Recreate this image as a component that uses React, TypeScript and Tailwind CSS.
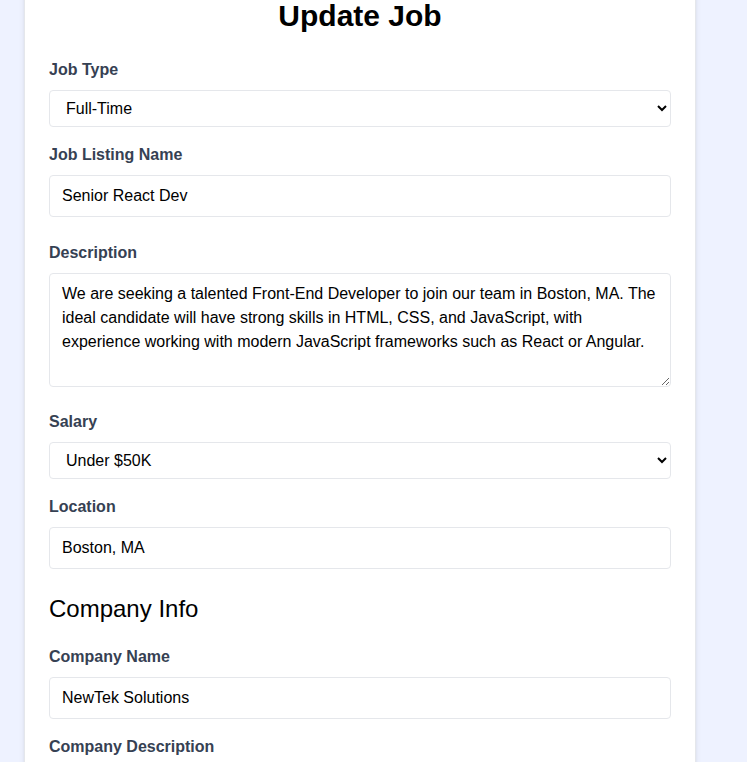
import React from "react";

export default function App() {
  const desc =
    "We are seeking a talented Front-End Developer to join our team in Boston, MA. The ideal candidate will have strong skills in HTML, CSS, and JavaScript, with experience working with modern JavaScript frameworks such as React or Angular.";
  const compDesc =
    "NewTek Solutions is a leading technology company specializing in web development and digital solutions. We pride ourselves on delivering high-quality products and services to our clients while fostering a collaborative and innovative work environment.";
  const label = "block text-gray-700 font-bold mb-2";
  const field = "border border-gray-200 rounded w-full py-2 px-3";
  return (
    <section
      className="bg-indigo-50 min-h-screen"
      style={{ fontFamily: '"Liberation Sans", Arial, sans-serif' }}
    >
      <div className="w-[672px] ml-[24px] -mt-[35px] pb-24">
        <div className="bg-white px-6 py-8 mb-4 shadow-md rounded-md border border-gray-200">
          <form onSubmit={(e) => e.preventDefault()}>
            <h2 className="text-3xl text-center font-semibold mb-6">Update Job</h2>

            <div className="mb-4">
              <label htmlFor="type" className={label}>
                Job Type
              </label>
              <select id="type" className={field} defaultValue="Full-Time">
                <option value="Full-Time">Full-Time</option>
                <option value="Part-Time">Part-Time</option>
                <option value="Remote">Remote</option>
                <option value="Internship">Internship</option>
              </select>
            </div>

            <div className="mb-4">
              <label className={label}>Job Listing Name</label>
              <input
                type="text"
                className={field + " mb-2"}
                defaultValue="Senior React Dev"
                placeholder="eg. Beautiful Apartment In Miami"
              />
            </div>

            <div className="mb-4">
              <label htmlFor="description" className={label}>
                Description
              </label>
              <textarea id="description" className={field + " resize-y"} rows={4} defaultValue={desc} />
            </div>

            <div className="mb-4">
              <label htmlFor="salary" className={label}>
                Salary
              </label>
              <select id="salary" className={field} defaultValue="Under $50K">
                <option value="Under $50K">Under $50K</option>
                <option value="$50K - 60K">$50K - $60K</option>
                <option value="$60K - 70K">$60K - $70K</option>
                <option value="$70K - 80K">$70K - $80K</option>
                <option value="$80K - 90K">$80K - $90K</option>
                <option value="Over $200K">Over $200K</option>
              </select>
            </div>

            <div className="mb-4">
              <label className={label}>Location</label>
              <input type="text" className={field + " mb-2"} defaultValue="Boston, MA" />
            </div>

            <h3 className="text-2xl mb-5">Company Info</h3>

            <div className="mb-4">
              <label htmlFor="company" className={label}>
                Company Name
              </label>
              <input id="company" type="text" className={field} defaultValue="NewTek Solutions" />
            </div>

            <div className="mb-4">
              <label htmlFor="company_description" className={label}>
                Company Description
              </label>
              <textarea id="company_description" className={field + " resize-y"} rows={4} defaultValue={compDesc} />
            </div>

            <div className="mb-4">
              <label className={label}>Contact Email</label>
              <input type="email" className={field} defaultValue="contact@teksolutions.com" />
            </div>

            <div className="mb-4">
              <label className={label}>Contact Phone</label>
              <input type="tel" className={field} defaultValue="555-555-5555" />
            </div>

            <div>
              <button
                className="bg-indigo-500 hover:bg-indigo-600 text-white font-bold py-2 px-4 rounded-full w-full"
                type="submit"
              >
                Update Job
              </button>
            </div>
          </form>
        </div>
      </div>
    </section>
  );
}
